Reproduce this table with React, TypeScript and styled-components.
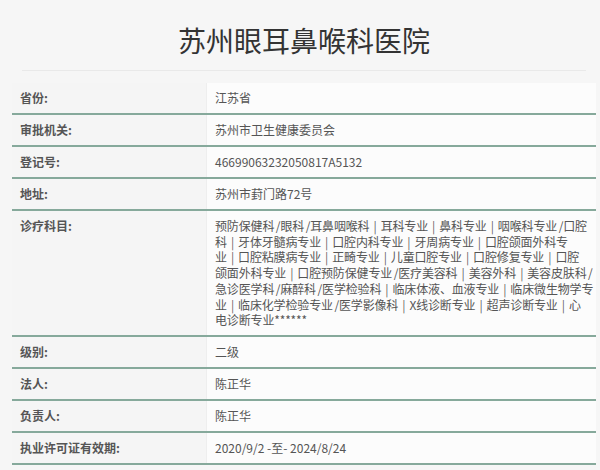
import React from "react";
import styled, { createGlobalStyle } from "styled-components";

const Global = createGlobalStyle`
  html, body { margin: 0; padding: 0; }
  body {
    background: #f6f6f6;
    font-family: "Noto Sans CJK SC", "Microsoft YaHei", "Noto Sans", sans-serif;
    color: #555;
  }
`;

const Page = styled.div`
  width: 600px;
  min-height: 470px;
  display: flex;
  flex-direction: column;
`;

const Header = styled.header`
  margin: 0 14px 0 22px;
  padding: 22px 0 12px;
  border-bottom: 1px solid #e9e9e9;
  display: flex;
  justify-content: center;
`;

const Title = styled.h1`
  margin: 0;
  font-size: 28px;
  line-height: 36px;
  font-weight: 400;
  color: #333;
`;

const Table = styled.div`
  margin: 12px 4px 0 12px;
  display: flex;
  flex-direction: column;
`;

const Row = styled.div`
  display: grid;
  grid-template-columns: 195px 1fr;
  border-bottom: 2px solid #86a99b;
`;

const Label = styled.div`
  padding: 8px 8px;
  font-size: 12px;
  line-height: 14px;
  font-weight: 700;
  color: #555;
  background: #f5f5f5;
  border-right: 1px solid #eeeeee;
`;

const Value = styled.div<{ $multi?: boolean }>`
  padding: ${(p) => (p.$multi ? "7px 4px 7px 8px" : "8px 8px")};
  font-size: 12px;
  line-height: ${(p) => (p.$multi ? "15.7px" : "14px")};
  letter-spacing: ${(p) => (p.$multi ? "-0.15px" : "0")};
  color: #555;
  background: #fcfcfc;
  overflow: hidden;
`;

const Line = styled.span`
  display: block;
  white-space: nowrap;
`;

const Pipe = styled.span`
  margin: 0 1.5px;
  color: #666;
`;

const Slash = styled.span`
  margin-left: -1px;
`;

const subjectLines = [
  "预防保健科 /眼科 /耳鼻咽喉科 | 耳科专业 | 鼻科专业 | 咽喉科专业 /口腔",
  "科 | 牙体牙髓病专业 | 口腔内科专业 | 牙周病专业 | 口腔颌面外科专",
  "业 | 口腔粘膜病专业 | 正畸专业 | 儿童口腔专业 | 口腔修复专业 | 口腔",
  "颌面外科专业 | 口腔预防保健专业 /医疗美容科 | 美容外科 | 美容皮肤科 /",
  "急诊医学科 /麻醉科 /医学检验科 | 临床体液、血液专业 | 临床微生物学专",
  "业 | 临床化学检验专业 /医学影像科 | X线诊断专业 | 超声诊断专业 | 心",
  "电诊断专业******",
];

const withSlashes = (text: string) =>
  text.split(" /").map((s, k) => (
    <React.Fragment key={k}>
      {k > 0 && (
        <>
          {" "}
          <Slash>/</Slash>
        </>
      )}
      {s}
    </React.Fragment>
  ));

const Subjects = () => (
  <>
    {subjectLines.map((line, i) => (
      <Line key={i}>
        {line.split(" | ").map((p, j) => (
          <React.Fragment key={j}>
            {j > 0 && (
              <>
                {" "}
                <Pipe>|</Pipe>{" "}
              </>
            )}
            {withSlashes(p)}
          </React.Fragment>
        ))}
      </Line>
    ))}
  </>
);

const rows: { label: string; value: React.ReactNode; multi?: boolean }[] = [
  { label: "省份:", value: "江苏省" },
  { label: "审批机关:", value: "苏州市卫生健康委员会" },
  { label: "登记号:", value: "46699063232050817A5132" },
  { label: "地址:", value: "苏州市葑门路72号" },
  { label: "诊疗科目:", value: <Subjects />, multi: true },
  { label: "级别:", value: "二级" },
  { label: "法人:", value: "陈正华" },
  { label: "负责人:", value: "陈正华" },
  { label: "执业许可证有效期:", value: "2020/9/2 -至- 2024/8/24" },
];

export default function App() {
  return (
    <Page>
      <Global />
      <Header>
        <Title>苏州眼耳鼻喉科医院</Title>
      </Header>
      <Table>
        {rows.map((r) => (
          <Row key={r.label}>
            <Label>{r.label}</Label>
            <Value $multi={r.multi}>{r.value}</Value>
          </Row>
        ))}
      </Table>
    </Page>
  );
}
